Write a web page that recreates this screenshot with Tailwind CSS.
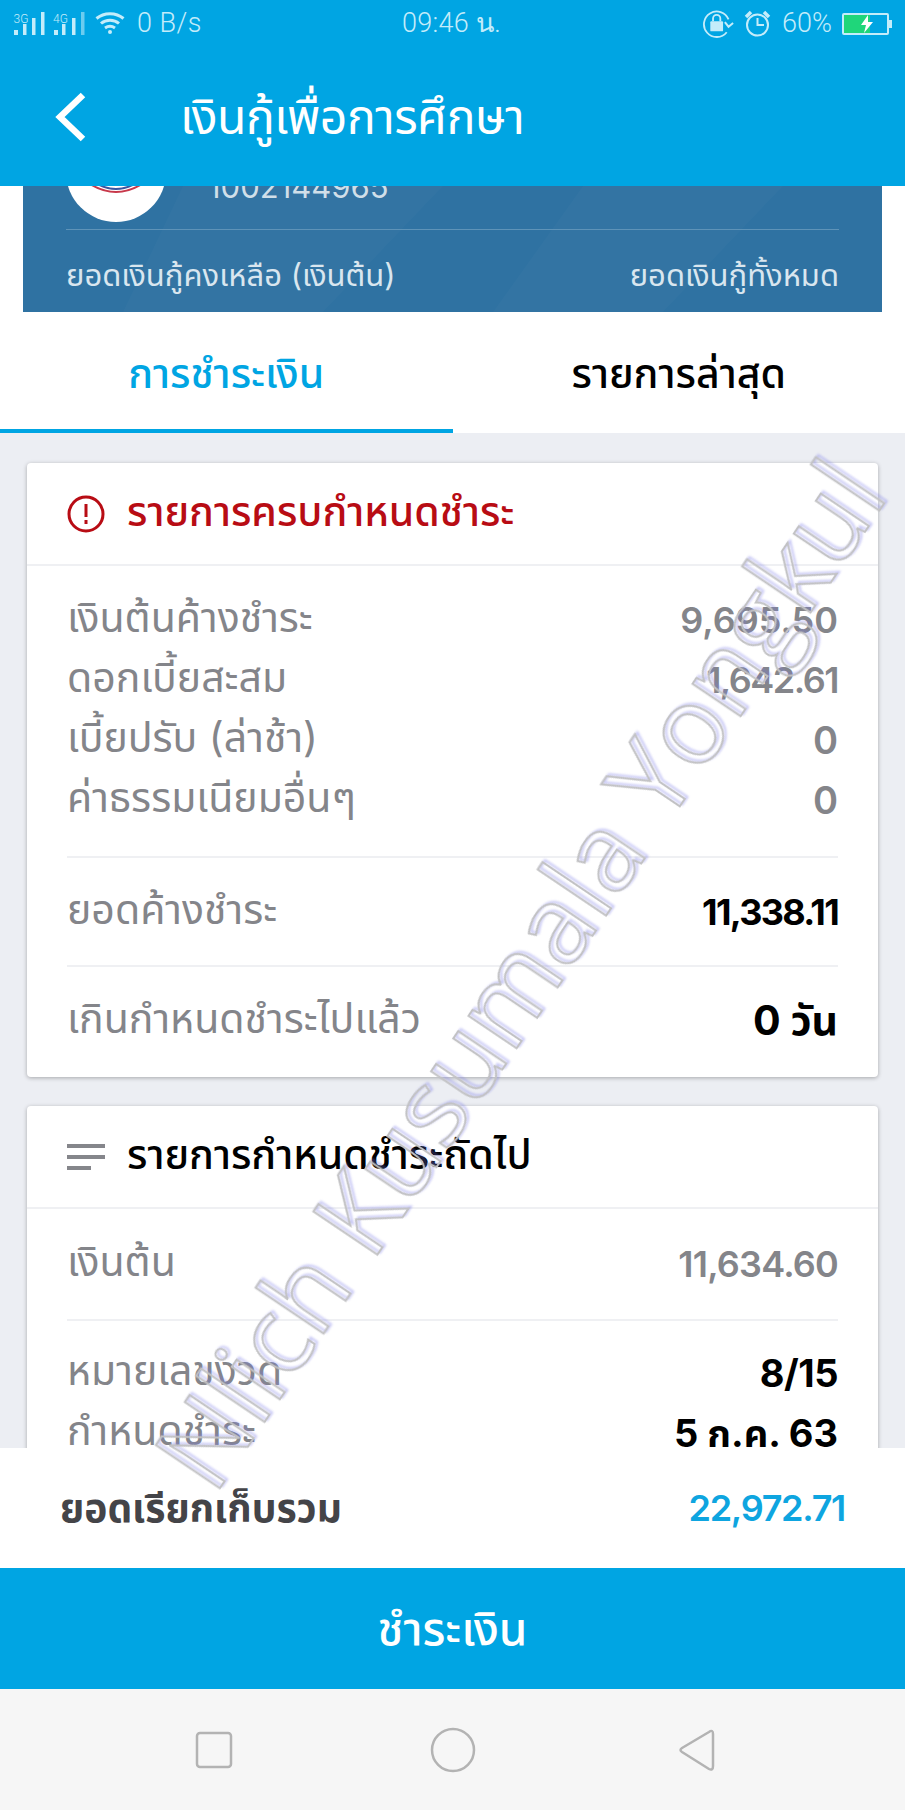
<!DOCTYPE html>
<html lang="th">
<head>
<meta charset="utf-8">
<script src="https://cdn.jsdelivr.net/npm/@tailwindcss/browser@4"></script>
</head>
<body class="m-0">
<div class="relative w-[905px] h-[1810px] overflow-hidden flex flex-col bg-[#eceef3] font-['Inter','Noto_Sans','Noto_Sans_Thai',sans-serif]">
  <!-- top blue -->
  <header class="relative z-10 h-[186px] shrink-0 bg-[#00a5e3] flex flex-col text-white">
    <div class="h-[47px] relative flex items-center justify-between pl-[13px] pr-[13px] text-[#c4ecfa] font-['Roboto',sans-serif] text-[27px] font-light">
      <div class="flex items-center">
        <svg width="72" height="28" viewBox="13 8 72 28" fill="#c4ecfa">
          <text x="13.5" y="21" font-size="12" font-family="Roboto">3G</text>
          <rect x="14" y="28" width="4" height="5"/><rect x="23" y="22" width="3.5" height="11"/><rect x="32" y="16" width="3.5" height="17"/><rect x="41" y="10" width="3.5" height="23"/>
          <text x="53" y="21" font-size="12" font-family="Roboto">4G</text>
          <rect x="54" y="28" width="4" height="5"/><rect x="62" y="22" width="3.5" height="11"/><rect x="72" y="16" width="3.5" height="17"/><rect x="81" y="10" width="3.5" height="23" opacity=".55"/>
        </svg>
        <svg width="30" height="23" viewBox="0 0 30 23" fill="none" stroke="#c4ecfa" stroke-width="3" class="ml-[10px] -mt-[2px]">
          <path d="M1.5 7.5 C9 1 21 1 28.5 7.5"/><path d="M6 12.5 C11 8 19 8 24 12.5"/><path d="M10 17 C13 15 17 15 20 17"/><circle cx="15" cy="21" r="2" fill="#c4ecfa" stroke="none"/>
        </svg>
        <span class="ml-[12px] tracking-[0.5px]">0 B/s</span>
      </div>
      <span class="absolute left-[402px] tracking-[0.3px]">09:46 น.</span>
      <div class="flex items-center">
        <svg width="31" height="30" viewBox="0 0 34 32" fill="none" stroke="#c4ecfa" stroke-width="2">
          <path d="M26 25 A14 14 0 1 1 28 11"/><path d="M24 14 L28 19 L33 15" stroke-width="2.2"/>
          <rect x="8" y="13" width="14" height="11" rx="1" fill="#c4ecfa" stroke="none"/><path d="M11 13 V10 a4 4 0 0 1 8 0 V13"/>
        </svg>
        <svg width="27" height="29" viewBox="0 0 27 29" fill="none" stroke="#c4ecfa" stroke-width="2" class="ml-[10px]">
          <circle cx="13.5" cy="16" r="10.5"/><path d="M13.5 9 V16 H20"/><path d="M2 8 L7 3 M25 8 L20 3" stroke-width="3.5"/>
        </svg>
        <span class="ml-[11px]">60%</span>
        <div class="ml-[10px] relative w-[47px] h-[22px] border-2 border-[#c4ecfa] rounded-[2px]">
          <div class="absolute left-0 top-0 bottom-0 w-[26px] bg-[#1fd67a]"></div>
          <svg class="absolute left-[15px] top-0" width="16" height="18" viewBox="0 0 16 18" fill="#fff"><path d="M9 0 L2 10 H7 L5 18 L14 7 H9 Z"/></svg>
        </div>
        <div class="w-[3px] h-[8px] bg-[#c4ecfa]"></div>
      </div>
    </div>
    <div class="flex-1 flex items-center">
      <svg class="ml-[54px]" width="34" height="50" viewBox="0 0 34 50" fill="none" stroke="#fff" stroke-width="6.5"><path d="M29 3 L6 25 L29 47"/></svg>
      <h1 class="ml-[92px] text-[48px] font-normal leading-none tracking-[-0.5px]">เงินกู้เพื่อการศึกษา</h1>
    </div>
  </header>

  <!-- account card -->
  <div class="h-[126px] shrink-0 bg-white px-[23px]">
    <div class="relative h-full overflow-hidden bg-[#2f72a2] px-[43px] flex flex-col">
      <svg class="absolute inset-0" width="859" height="126" viewBox="0 0 859 126">
        <polygon points="100,126 160,0 420,0 300,126" fill="#fff" opacity=".02"/>
        <polygon points="470,126 560,0 760,0 640,126" fill="#fff" opacity=".02"/>
      </svg>
      <div class="relative h-[43px] flex shrink-0 overflow-hidden">
        <div class="w-[100px] h-[100px] rounded-full bg-white -mt-[64px] shrink-0 overflow-hidden">
          <svg width="100" height="100" viewBox="0 0 100 100" fill="none">
            <path d="M24 62 Q50 78 76 62" stroke="#c8384a" stroke-width="2"/>
            <path d="M28 60 Q50 74 72 60" stroke="#3b55a0" stroke-width="2"/>
          </svg>
        </div>
        <span class="ml-[42px] -mt-[16px] text-[31px] leading-[34px] font-normal text-[#d0dfe9]">1002144965</span>
      </div>
      <div class="relative h-[1px] bg-[#5e93b8] shrink-0"></div>
      <div class="relative flex-1 flex items-center justify-between pt-[9px] text-[31px] text-[#d9e6ef]">
        <span>ยอดเงินกู้คงเหลือ (เงินต้น)</span>
        <span>ยอดเงินกู้ทั้งหมด</span>
      </div>
    </div>
  </div>

  <!-- tabs -->
  <nav class="h-[121px] shrink-0 bg-white grid grid-cols-2 text-[41px] font-medium">
    <div class="flex items-center justify-center border-b-[4px] border-[#00a5e3] text-[#00a5e3] pt-[6px]">การชำระเงิน</div>
    <div class="flex items-center justify-center pt-[2px] text-black">รายการล่าสุด</div>
  </nav>

  <!-- content -->
  <main class="flex-1 min-h-0 overflow-hidden px-[27px] pt-[30px] flex flex-col gap-[29px]">
    <section class="h-[614px] shrink-0 bg-white rounded-[4px] shadow-[0_1px_4px_rgba(0,0,0,0.3)] flex flex-col">
      <div class="h-[103px] shrink-0 border-b-2 border-[#eff0f3] flex items-center px-[40px]">
        <svg width="38" height="38" viewBox="0 0 38 38" fill="none" stroke="#b80c14" stroke-width="3"><circle cx="19" cy="19" r="17"/><path d="M19 9 V22 M19 25 V29"/></svg>
        <h2 class="ml-[22px] -mt-[4px] text-[41px] font-medium text-[#b80c14] leading-none">รายการครบกำหนดชำระ</h2>
      </div>
      <div class="px-[40px] pt-[24px] flex flex-col">
        <div class="flex flex-col text-[#84858a] text-[41px]">
          <div class="h-[60px] flex items-center justify-between"><span class="-mt-[4px]">เงินต้นค้างชำระ</span><span class="font-semibold text-[36px]">9,695.50</span></div>
          <div class="h-[60px] flex items-center justify-between"><span class="-mt-[4px]">ดอกเบี้ยสะสม</span><span class="font-semibold text-[36px] tracking-[-1.5px]">1,642.61</span></div>
          <div class="h-[60px] flex items-center justify-between"><span class="-mt-[4px]">เบี้ยปรับ (ล่าช้า)</span><span class="font-semibold text-[38px]">0</span></div>
          <div class="h-[60px] flex items-center justify-between"><span class="-mt-[4px]">ค่าธรรมเนียมอื่นๆ</span><span class="font-semibold text-[38px]">0</span></div>
        </div>
        <div class="h-[2px] bg-[#eff0f3] mt-[26px]"></div>
        <div class="h-[107px] flex items-center justify-between text-[41px] text-[#84858a]"><span class="-mt-[4px]">ยอดค้างชำระ</span><span class="font-bold text-black text-[36px] tracking-[-1.7px]">11,338.11</span></div>
        <div class="h-[2px] bg-[#eff0f3]"></div>
        <div class="h-[107px] flex items-center justify-between text-[41px] text-[#84858a]"><span class="-mt-[4px]">เกินกำหนดชำระไปแล้ว</span><span class="font-bold text-black text-[41px]">0 วัน</span></div>
      </div>
    </section>
    <section class="shrink-0 h-[500px] bg-white rounded-[4px] shadow-[0_1px_4px_rgba(0,0,0,0.3)] flex flex-col">
      <div class="h-[103px] shrink-0 border-b-2 border-[#eff0f3] flex items-center px-[40px]">
        <svg width="38" height="30" viewBox="0 0 38 30" fill="#85868b"><rect width="38" height="4" y="2"/><rect width="38" height="4" y="13"/><rect width="24" height="4" y="24"/></svg>
        <h2 class="ml-[22px] -mt-[4px] text-[41px] font-medium text-black leading-none">รายการกำหนดชำระถัดไป</h2>
      </div>
      <div class="px-[40px] flex flex-col">
        <div class="h-[110px] flex items-center justify-between text-[41px] text-[#84858a]"><span class="-mt-[4px]">เงินต้น</span><span class="font-semibold text-[36px] tracking-[-0.8px]">11,634.60</span></div>
        <div class="h-[2px] bg-[#eff0f3]"></div>
        <div class="pt-[22px] flex flex-col text-[41px] text-[#84858a]">
          <div class="h-[60px] flex items-center justify-between"><span class="-mt-[4px]">หมายเลขงวด</span><span class="font-bold text-black text-[38px] tracking-[-0.5px]">8/15</span></div>
          <div class="h-[60px] flex items-center justify-between"><span class="-mt-[4px]">กำหนดชำระ</span><span class="font-bold text-black text-[38px]">5 ก.ค. 63</span></div>
        </div>
      </div>
    </section>
  </main>

  <!-- footer -->
  <div class="h-[120px] shrink-0 bg-white flex items-center justify-between pl-[60px] pr-[60px]">
    <span class="text-[39px] font-bold text-[#444448]">ยอดเรียกเก็บรวม</span>
    <span class="text-[36px] font-semibold text-[#0ea5e0] tracking-[-1.3px]">22,972.71</span>
  </div>
  <button class="h-[121px] shrink-0 bg-[#00a5e3] text-white text-[46px] font-medium flex items-center justify-center">ชำระเงิน</button>
  <div class="h-[121px] shrink-0 bg-[#f6f6f6] relative flex items-center justify-center">
    <div class="flex items-center ml-[5px]">
      <svg width="38" height="38" viewBox="0 0 38 38" fill="none" stroke="#b3b3b3" stroke-width="2.5"><rect x="2" y="2" width="34" height="34" rx="3"/></svg>
      <svg class="ml-[197px]" width="46" height="46" viewBox="0 0 46 46" fill="none" stroke="#b3b3b3" stroke-width="2.5"><circle cx="23" cy="23" r="21"/></svg>
      <svg class="ml-[202px]" width="38" height="44" viewBox="0 0 38 44" fill="none" stroke="#b3b3b3" stroke-width="2.5" stroke-linejoin="round"><path d="M35 6 Q35 1 31 4 L4 20 Q1 22 4 24 L31 41 Q35 43 35 38 Z"/></svg>
    </div>
  </div>

  <!-- watermark -->
  <div class="absolute z-20 left-[180px] top-[1420px] origin-left -rotate-[56deg] whitespace-nowrap pointer-events-none font-['Open_Sans',sans-serif] text-[108px] leading-none text-transparent [-webkit-text-stroke:2px_#c2c2c4] drop-shadow-[3px_1px_1px_rgba(120,120,230,0.45)]">Nlich Kusumala Yongkul</div>
</div>
</body>
</html>
